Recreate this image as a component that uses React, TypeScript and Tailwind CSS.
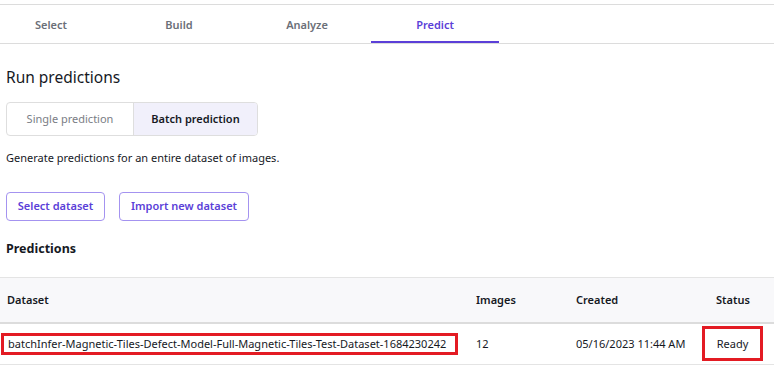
import React from "react";

const tabs = ["Select", "Build", "Analyze", "Predict"];

const font = { fontFamily: '"Noto Sans", "Open Sans", sans-serif' };

const Tabs = () => {
  return (
    <div className="mt-[4px] border-t border-b border-[#dcdcdc] h-[40px] flex overflow-hidden">
      <div className="flex -ml-[13px]">
        {tabs.map((t) => (
          <div
            key={t}
            className={
              t === "Predict"
                ? "w-[128px] pt-[4px] flex items-center justify-center text-[11px] font-semibold text-[#5b3fd8] border-b-2 border-[#5b3fd8]"
                : "w-[128px] pt-[4px] flex items-center justify-center text-[11px] font-semibold text-[#6b6f78] border-b-2 border-transparent"
            }
          >
            {t}
          </div>
        ))}
      </div>
    </div>
  );
};

export default function App() {
  return (
    <div className="w-[774px] h-[384px] bg-white text-[#16191f] overflow-hidden" style={font}>
      <Tabs />

      <div className="px-[6px]">
        <h1 className="mt-[22px] text-[15.5px] leading-[22px]">Run predictions</h1>

        <div className="mt-[14px] inline-flex h-[34px] border border-[#dedede] rounded-[4px] overflow-hidden text-[11px]">
          <div className="w-[127px] flex items-center justify-center text-[#7a7d85] border-r border-[#dedede]">
            Single prediction
          </div>
          <div className="w-[123px] flex items-center justify-center bg-[#f1f0fb] font-semibold">
            Batch prediction
          </div>
        </div>

        <p className="mt-[14px] text-[11px] leading-[16px]">
          Generate predictions for an entire dataset of images.
        </p>

        <div className="mt-[26px] flex gap-[14px]">
          <button className="h-[29px] w-[99px] border border-[#a493f0] rounded-[4px] text-[11px] font-semibold text-[#5b3fd8]">
            Select dataset
          </button>
          <button className="h-[29px] w-[130px] border border-[#a493f0] rounded-[4px] text-[11px] font-semibold text-[#5b3fd8]">
            Import new dataset
          </button>
        </div>

        <h2 className="mt-[19px] text-[12.5px] font-bold leading-[18px]">Predictions</h2>
      </div>

      <table className="mt-[19px] w-full border-collapse text-[11px]">
        <thead>
          <tr className="h-[45px] bg-[#f8f8fa] border-t border-[#e4e4e4] border-b-2 border-b-[#dcdcdc]">
            <th className="text-left font-semibold pl-[7px] w-[476px]">Dataset</th>
            <th className="text-left font-semibold w-[100px]">Images</th>
            <th className="text-left font-semibold w-[140px]">Created</th>
            <th className="text-left font-semibold">Status</th>
          </tr>
        </thead>
        <tbody>
          <tr className="h-[42px] border-b border-[#e4e4e4]">
            <td className="pl-[1px]">
              <span className="inline-block w-[457px] border-[3px] border-[#e31b23] pl-[4px] leading-[16px] whitespace-nowrap">
                batchInfer-Magnetic-Tiles-Defect-Model-Full-Magnetic-Tiles-Test-Dataset-1684230242
              </span>
            </td>
            <td>12</td>
            <td>05/16/2023 11:44 AM</td>
            <td>
              <span className="-ml-[14px] inline-flex items-center justify-center w-[61px] h-[35px] border-[3px] border-[#e31b23]">
                Ready
              </span>
            </td>
          </tr>
        </tbody>
      </table>
    </div>
  );
}
